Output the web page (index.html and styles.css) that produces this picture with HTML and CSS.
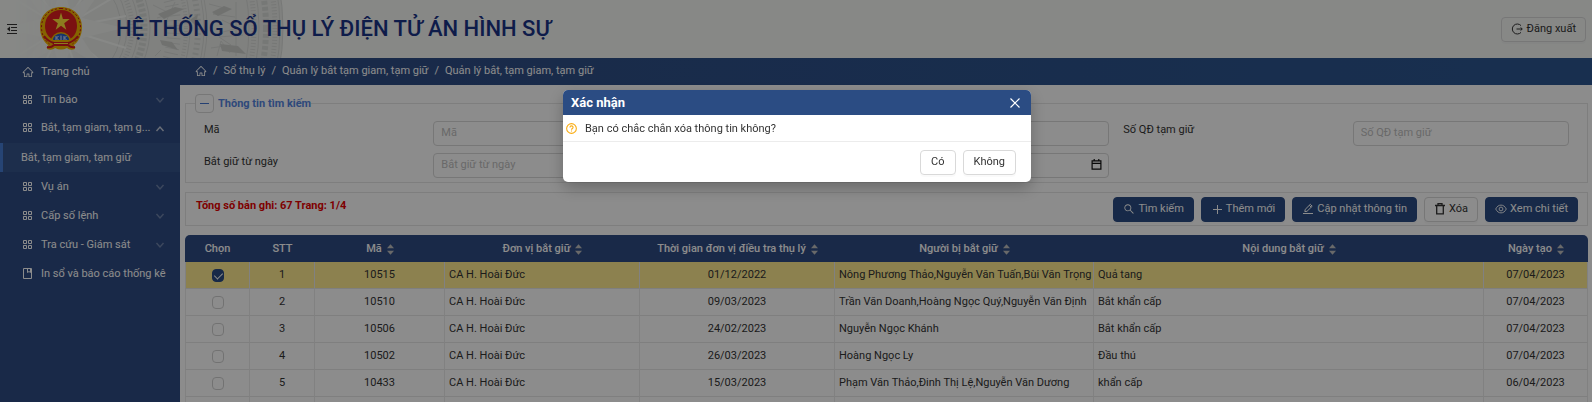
FILE: index.html
```html
<!DOCTYPE html>
<html lang="vi">
<head>
<meta charset="utf-8">
<title>Hệ thống sổ thụ lý điện tử án hình sự</title>
<link rel="stylesheet" href="styles.css">
</head>
<body>
<svg class="defs" aria-hidden="true">
  <symbol id="home" viewBox="0 0 1024 1024"><path d="M946.5 505L534.6 93.400a31.930 31.930 0 0 0-45.200 0L77.500 505c-12 12-18.800 28.300-18.800 45.300 0 35.300 28.700 64 64 64h43.400V908c0 17.700 14.300 32 32 32H448V716h112v224h265.900c17.700 0 32-14.300 32-32V614.300h43.400c17 0 33.300-6.700 45.300-18.800 24.900-25 24.900-65.500-.1-90.500zM786 542.300V868H632V676a32 32 0 0 0-32-32H424a32 32 0 0 0-32 32v192H238V542.300h-96l370-369.700 370 369.700z"/></symbol>
  <symbol id="grid" viewBox="0 0 12 12"><path fill="none" stroke="currentColor" d="M1.500 1.500h3v3h-3zM6.500 1.500h3v3h-3zM1.500 6.500h3v3h-3zM6.500 6.500h3v3h-3z"/></symbol>
  <symbol id="book" viewBox="0 0 12 12"><path fill="none" stroke="currentColor" d="M1.500 .5h8v10h-8zM5.500 .5v4l1.500-1 1.500 1v-4"/></symbol>
  <symbol id="down" viewBox="0 0 10 10"><path fill="none" stroke="currentColor" stroke-width="1.400" d="M1.500 3l3.500 4 3.500-4"/></symbol>
  <symbol id="up" viewBox="0 0 10 10"><path fill="none" stroke="currentColor" stroke-width="1.400" d="M1.500 8l3.500-4 3.500 4"/></symbol>
  <symbol id="search" viewBox="0 0 1024 1024"><path d="M909.600 854.500L649.900 594.800C690.200 542.700 712 479 712 412c0-80.200-31.300-155.400-87.900-212.100-56.600-56.700-132-87.900-212.100-87.900s-155.500 31.300-212.100 87.900C143.200 256.500 112 331.800 112 412c0 80.100 31.300 155.500 87.900 212.100C256.500 680.800 331.800 712 412 712c67 0 130.600-21.800 182.700-62l259.700 259.600a8.200 8.200 0 0 0 11.600 0l43.600-43.500a8.200 8.200 0 0 0 0-11.600zM570.400 570.400C528 612.700 471.800 636 412 636s-116-23.300-158.400-65.600C211.300 528 188 471.800 188 412s23.300-116.100 65.600-158.400C296 211.300 352.200 188 412 188s116.100 23.200 158.400 65.600S636 352.200 636 412s-23.300 116.100-65.600 158.400z"/></symbol>
  <symbol id="plus" viewBox="0 0 12 12"><path fill="none" stroke="currentColor" d="M6.500 2v9M2 6.500h9"/></symbol>
  <symbol id="edit" viewBox="0 0 12 12"><path fill="none" stroke="currentColor" d="M1 10.500h10M2.800 8.600l.4-2.200L8.300 1.300l1.900 1.900L5 8.300zM7.300 2.300l1.900 1.900"/></symbol>
  <symbol id="trash" viewBox="0 0 12 12"><path fill="none" stroke="currentColor" stroke-width="1.300" d="M1 2.500h10M4 2.300V.7h4v1.600M2.700 2.700v8.100h6.600V2.700"/></symbol>
  <symbol id="eye" viewBox="0 0 12 12"><g fill="none" stroke="currentColor" stroke-width=".9"><path d="M.7 6C2 3.400 3.800 2.100 6 2.100S10 3.400 11.300 6C10 8.600 8.200 9.900 6 9.900S2 8.600.7 6z"/><circle cx="6" cy="6" r="1.900"/></g></symbol>
  <symbol id="sort" viewBox="0 0 8 12"><path d="M4 0l4 4.500H0zM4 12l4-4.500H0z"/></symbol>
</svg>

<div class="page">
  <header class="top">
    <svg class="drum" viewBox="0 0 290 58" preserveAspectRatio="xMinYMin slice" aria-hidden="true">
      <defs>
        <linearGradient id="fade"><stop offset=".05" stop-color="#fff" stop-opacity="0"/><stop offset=".3" stop-color="#fff"/></linearGradient>
        <mask id="fadeMask"><rect width="290" height="58" fill="url(#fade)"/></mask>
      </defs>
      <g mask="url(#fadeMask)">
        <circle cx="62" cy="28" r="221" fill="#e9ebe8"/>
        <g fill="none" stroke="#d8dad7">
          <circle cx="62" cy="28" r="221"/><circle cx="62" cy="28" r="218"/>
          <circle cx="62" cy="28" r="213" stroke-width="5" stroke-dasharray="1 2"/>
          <circle cx="62" cy="28" r="204" stroke-width="6" stroke-dasharray="4 2"/>
          <circle cx="62" cy="28" r="197"/><circle cx="62" cy="28" r="192" stroke-width="5" stroke-dasharray="1 2"/>
          <circle cx="62" cy="28" r="187"/>
          <circle cx="62" cy="28" r="145"/><circle cx="62" cy="28" r="142"/>
          <circle cx="62" cy="28" r="136" stroke-width="6" stroke-dasharray="2 3"/>
          <circle cx="62" cy="28" r="128"/><circle cx="62" cy="28" r="124" stroke-width="4" stroke-dasharray="1 2"/>
          <circle cx="62" cy="28" r="112" stroke-width="14" stroke-dasharray="1 4"/>
          <circle cx="62" cy="28" r="88"/><circle cx="62" cy="28" r="82" stroke-width="7" stroke-dasharray="3 2"/>
          <circle cx="62" cy="28" r="76"/><circle cx="62" cy="28" r="70" stroke-width="5" stroke-dasharray="1 2"/>
          <circle cx="62" cy="28" r="65"/><circle cx="62" cy="28" r="59"/>
          <path d="M209 4l19 5-15 5 22 3M211 48l20-3-12-8 24-2M217 56l4-15 9 12M175 2l-10 22M222 20l17 8-20 5M236 2v54M161 50l-6 6M153 5l18 9-14 4"/>
        </g>
        <path fill="#cccecb" d="M158 14l17-7 9 2-20 10zM160 40l12 2 6 8-16-5zM212 12l12-6 8 3-14 7zM220 44l18 2 8 8-24-3zM190 20l8-6-2 12z"/>
        <path fill="none" stroke="#f6f8f5" stroke-width="2" d="M62 28L10-4M62 28L38-8M62 28V-8M62 28L86-8M62 28L116-4M62 28L126 16M62 28l64 20M62 28l42 36M62 28l14 40M62 28L44 64M62 28L14 58M62 28L2 34"/>
        <path fill="#f0f2ef" d="M62-18l8 28 34-24-22 32 42 10-42 10 20 30-32-20-8 30-8-30-34 20 24-30-38-10 38-10-24-32 34 24z"/>
      </g>
    </svg>
    <button class="fold" type="button" aria-label="Thu gọn menu">
      <svg viewBox="0 0 12 12"><path fill="none" stroke="currentColor" d="M1 1.500h10M5 4.500h6M5 7.500h6M1 10.500h10"/><path d="M4 3.500v5L1 6z"/></svg>
    </button>
    <svg class="emblem" viewBox="0 0 42 44" role="img" aria-label="Quốc huy">
      <path fill="#f2b400" d="M21 0C8 0 0 9 0 20c0 9 4 15 8 18l-1 4c3 1 6 1 8-1 4 2 8 2 12 0 2 2 5 2 8 1l-1-4c4-3 8-9 8-18C42 9 34 0 21 0z"/>
      <path fill="none" stroke="#c8141c" stroke-dasharray="2 2" d="M21 1.500C9 1.500 1.500 10 1.500 20c0 8 3 13 8 17M21 1.500c12 0 19.500 8.500 19.500 18.500 0 8-3 13-8 17"/>
      <path fill="#e02020" d="M21 3C11 3 5 10 5 19c0 6 3 11 7 13h18c4-2 7-7 7-13C37 10 31 3 21 3z"/>
      <path fill="#ffe23a" d="M21 5.500l1.900 6.600h6.800l-5.500 4.100 2.100 6.600-5.300-4.100-5.300 4.100 2.100-6.600-5.500-4.100h6.800z"/>
      <path fill="#f2b400" d="M11 34a10 9 0 0 1 20 0z"/>
      <path fill="#2862c8" d="M13 33a8 6.500 0 0 1 16 0z"/>
      <path fill="none" stroke="#e3ecff" d="M16 29v4M16.500 31l2-2M16.500 31l2 2M21 28.500v4.500M24 29v4M24.500 31l2-2M24.500 31l2 2"/>
      <path fill="none" stroke="#d81820" stroke-width="2" d="M4 29c3 4 6 6 10 7M38 29c-3 4-6 6-10 7M7 40c3 1 5 0 7-2M35 40c-3 1-5 0-7-2"/>
      <path fill="#d81820" d="M12 35h18l-2 4H14z"/>
      <path fill="none" stroke="#ffe23a" d="M14 36.500h14"/>
    </svg>
    <h1 class="title">HỆ THỐNG SỔ THỤ LÝ ĐIỆN TỬ ÁN HÌNH SỰ</h1>
    <button class="btn logout" type="button">
      <svg class="ico" viewBox="0 0 12 12"><path fill="none" stroke="currentColor" d="M10 2.600A5 5 0 1 0 10 9.400M5.500 6H11M9.600 4.500L11.300 6 9.600 7.500"/></svg>
      Đăng xuất
    </button>
  </header>

  <div class="shell">
    <nav class="side">
      <a class="item" href="#"><svg class="ico"><use href="#home"/></svg><span class="name">Trang chủ</span></a>
      <a class="item" href="#"><svg class="ico"><use href="#grid"/></svg><span class="name">Tin báo</span><svg class="arrow"><use href="#down"/></svg></a>
      <a class="item" href="#"><svg class="ico"><use href="#grid"/></svg><span class="name">Bắt, tạm giam, tạm g...</span><svg class="arrow open"><use href="#up"/></svg></a>
      <a class="item sub" href="#"><span class="name">Bắt, tạm giam, tạm giữ</span></a>
      <a class="item" href="#"><svg class="ico"><use href="#grid"/></svg><span class="name">Vụ án</span><svg class="arrow"><use href="#down"/></svg></a>
      <a class="item" href="#"><svg class="ico"><use href="#grid"/></svg><span class="name">Cấp số lệnh</span><svg class="arrow"><use href="#down"/></svg></a>
      <a class="item" href="#"><svg class="ico"><use href="#grid"/></svg><span class="name">Tra cứu - Giám sát</span><svg class="arrow"><use href="#down"/></svg></a>
      <a class="item last" href="#"><svg class="ico"><use href="#book"/></svg><span class="name">In sổ và báo cáo thống kê</span></a>
    </nav>

    <main class="main">
      <nav class="crumbs" aria-label="Đường dẫn">
        <a href="#" aria-label="Trang chủ"><svg class="ico"><use href="#home"/></svg></a><span>/</span>
        <a href="#">Sổ thụ lý</a><span>/</span>
        <a href="#">Quản lý bắt tạm giam, tạm giữ</a><span>/</span>
        <a href="#">Quản lý bắt, tạm giam, tạm giữ</a>
      </nav>

      <div class="content">
        <fieldset class="search">
          <legend><button class="toggle" type="button" aria-label="Thu gọn"></button>Thông tin tìm kiếm</legend>
          <div class="fields">
            <div class="field"><label for="ma">Mã</label><input id="ma" placeholder="Mã"></div>
            <div class="field"><span></span><input aria-label="Số QĐ bắt"></div>
            <div class="field"><label for="qd">Số QĐ tạm giữ</label><input id="qd" placeholder="Số QĐ tạm giữ"></div>
            <div class="field"><label for="tu">Bắt giữ từ ngày</label><input id="tu" placeholder="Bắt giữ từ ngày"></div>
            <div class="field"><span></span>
              <span class="date"><input aria-label="Đến ngày"><svg viewBox="0 0 12 12"><path fill="none" stroke="currentColor" stroke-width="1.300" d="M1.200 2h9.600v9H1.200zM1 4.700h10M3.500 0v2.500M8.500 0v2.500"/></svg></span></div>
          </div>
        </fieldset>

        <section class="bar">
          <p class="total">Tổng số bản ghi: 67 Trang: 1/4</p>
          <div class="actions">
            <button class="btn primary" type="button"><svg class="ico"><use href="#search"/></svg>Tìm kiếm</button>
            <button class="btn primary" type="button"><svg class="ico"><use href="#plus"/></svg>Thêm mới</button>
            <button class="btn primary" type="button"><svg class="ico"><use href="#edit"/></svg>Cập nhật thông tin</button>
            <button class="btn" type="button"><svg class="ico"><use href="#trash"/></svg>Xóa</button>
            <button class="btn primary" type="button"><svg class="ico"><use href="#eye"/></svg>Xem chi tiết</button>
          </div>
        </section>

        <table class="list">
          <colgroup><col class="c1"><col class="c2"><col class="c3"><col class="c4"><col class="c4"><col class="c5"><col class="c6"><col class="c7"></colgroup>
          <thead>
            <tr>
              <th>Chọn</th><th>STT</th>
              <th>Mã<svg class="sort"><use href="#sort"/></svg></th>
              <th>Đơn vị bắt giữ<svg class="sort"><use href="#sort"/></svg></th>
              <th>Thời gian đơn vị điều tra thụ lý<svg class="sort"><use href="#sort"/></svg></th>
              <th>Người bị bắt giữ<svg class="sort"><use href="#sort"/></svg></th>
              <th>Nội dung bắt giữ<svg class="sort"><use href="#sort"/></svg></th>
              <th>Ngày tạo<svg class="sort"><use href="#sort"/></svg></th>
            </tr>
          </thead>
          <tbody>
            <tr class="picked"><td><input type="checkbox" aria-label="Chọn 10515" checked></td><td>1</td><td>10515</td><td class="text">CA H. Hoài Đức</td><td>01/12/2022</td><td class="text">Nông Phương Thảo,Nguyễn Văn Tuấn,Bùi Văn Trọng</td><td class="text">Quả tang</td><td>07/04/2023</td></tr>
            <tr><td><input type="checkbox" aria-label="Chọn 10510"></td><td>2</td><td>10510</td><td class="text">CA H. Hoài Đức</td><td>09/03/2023</td><td class="text">Trần Văn Doanh,Hoàng Ngọc Quý,Nguyễn Văn Định</td><td class="text">Bắt khẩn cấp</td><td>07/04/2023</td></tr>
            <tr><td><input type="checkbox" aria-label="Chọn 10506"></td><td>3</td><td>10506</td><td class="text">CA H. Hoài Đức</td><td>24/02/2023</td><td class="text">Nguyễn Ngọc Khánh</td><td class="text">Bắt khẩn cấp</td><td>07/04/2023</td></tr>
            <tr><td><input type="checkbox" aria-label="Chọn 10502"></td><td>4</td><td>10502</td><td class="text">CA H. Hoài Đức</td><td>26/03/2023</td><td class="text">Hoàng Ngọc Ly</td><td class="text">Đầu thú</td><td>07/04/2023</td></tr>
            <tr><td><input type="checkbox" aria-label="Chọn 10433"></td><td>5</td><td>10433</td><td class="text">CA H. Hoài Đức</td><td>15/03/2023</td><td class="text">Phạm Văn Thảo,Đinh Thị Lệ,Nguyễn Văn Dương</td><td class="text">khẩn cấp</td><td>06/04/2023</td></tr>
            <tr><td></td><td></td><td></td><td></td><td></td><td></td><td></td><td></td></tr>
          </tbody>
        </table>
      </div>
    </main>
  </div>
</div>

<div class="mask">
  <div class="modal" role="dialog" aria-modal="true" aria-labelledby="dlg">
    <div class="modal-head">
      <h2 id="dlg">Xác nhận</h2>
      <button class="close" type="button" aria-label="Đóng"><svg viewBox="0 0 10 10"><path fill="none" stroke="currentColor" stroke-width="1.200" d="M.5.5l9 9M9.500.5l-9 9"/></svg></button>
    </div>
    <div class="modal-body">
      <svg viewBox="0 0 12 12"><g fill="none" stroke="currentColor" stroke-width="1.200"><circle cx="6" cy="6" r="5.300"/><path d="M4.300 4.900C4.300 2.600 7.700 2.600 7.700 4.800 7.700 6 6 6 6 7.400M6 8.300v1"/></g></svg>
      <p>Bạn có chắc chắn xóa thông tin không?</p>
    </div>
    <div class="modal-foot">
      <button class="btn" type="button">Có</button>
      <button class="btn" type="button">Không</button>
    </div>
  </div>
</div>
</body>
</html>
```

FILE: styles.css
```css
* { box-sizing: border-box; }

html, body { height: 100%; }

body {
  margin: 0;
  overflow: hidden;
  background: #fff;
  color: #333;
  font: 11px/16px Roboto, "Noto Sans", sans-serif;
}

h1, h2, p { margin: 0; }
a { color: inherit; text-decoration: none; }
svg { display: block; flex: none; fill: currentColor; }
.defs { position: absolute; width: 0; height: 0; }
.ico { width: 12px; height: 12px; }

button, input { font: inherit; color: inherit; }

.page { display: flex; flex-direction: column; height: 100vh; overflow: hidden; }

/* Header */
.top {
  position: relative;
  display: flex;
  flex: none;
  align-items: center;
  height: 58px;
  padding: 0 6px;
  background: #f6f8f5;
  overflow: hidden;
}
.drum { position: absolute; left: 0; top: 0; width: 290px; height: 58px; }
.fold { position: relative; width: 12px; height: 12px; padding: 0; border: 0; background: none; }
.fold svg { width: 12px; height: 12px; }
.emblem { position: relative; width: 42px; height: 44px; margin-left: 22px; }
.title {
  position: relative;
  flex: 1;
  margin-left: 34px;
  color: #1b3488;
  font-size: 22px;
  line-height: 28px;
  font-weight: 500;
}

.btn {
  display: flex;
  align-items: center;
  justify-content: center;
  gap: 3px;
  height: 25px;
  padding: 0 9px 2px;
  border: 1px solid #d9d9d9;
  border-radius: 4px;
  background: #fff;
  box-shadow: 0 2px 0 rgba(0, 0, 0, .02);
  white-space: nowrap;
}
.btn.primary { border-color: #2b4c83; background: #2b4c83; color: #fff; }
.btn.logout { gap: 4px; padding-bottom: 0; background: none; }

/* Sidebar */
.shell { display: flex; flex: 1; min-height: 0; }
.side {
  flex: none;
  width: 180px;
  background: #2f4c84;
  color: #fff;
}
.item { display: flex; align-items: center; height: 28px; padding: 0 15px 0 22px; }
.item .name {
  flex: 1;
  min-width: 0;
  margin: 0 5px 0 7px;
  white-space: nowrap;
}
.item.last .name { margin-right: 0; }
.arrow { width: 10px; height: 10px; opacity: .3; }
.arrow.open { opacity: .7; }
.item.sub { margin-top: 1px; padding-left: 18px; border-left: 3px solid #457cd3; background: #36558a; }
.item.sub, .sub ~ .item { height: 29px; }
.item.sub .name { margin-left: 0; }

/* Main area */
.main { flex: 1; min-width: 0; }
.crumbs {
  display: flex;
  align-items: center;
  gap: 6px;
  height: 27px;
  padding: 0 15px 2px;
  background: linear-gradient(90deg, #2f4c84, #2c5791);
  color: #fff;
}

.content { padding: 9px 4px 0 5px; }

.search {
  margin: 0;
  padding: 8px 18px 4px;
  border: 1px solid #e6e6e6;
  min-width: 0;
}
.search legend {
  display: flex;
  align-items: center;
  gap: 4px;
  height: 19px;
  margin-left: -9px;
  padding: 0;
  color: #5585e0;
  font-weight: 700;
}
.toggle {
  display: flex;
  align-items: center;
  justify-content: center;
  width: 19px;
  height: 19px;
  padding: 0;
  border: 1px solid #d9d9d9;
  border-radius: 4px;
  background: none;
}
.toggle::before { content: ""; width: 9px; height: 1px; background: #4475d0; }

.fields { display: grid; grid-template-columns: repeat(3, 1fr); gap: 7px 14px; }
.field { display: grid; grid-template-columns: 229fr 216fr; height: 25px; }
.field label { padding-top: 1px; }
.field input {
  width: 100%;
  min-width: 0;
  height: 25px;
  padding: 0 7px 2px;
  border: 1px solid #d9d9d9;
  border-radius: 4px;
  background: none;
  outline: 0;
}
.field input::placeholder { color: #bfbfbf; opacity: 1; }
.date { position: relative; }
.date svg { position: absolute; right: 7px; top: 6px; width: 11px; height: 11px; color: #111; }

.bar {
  display: flex;
  align-items: flex-start;
  justify-content: space-between;
  margin-top: 9px;
  padding: 4px 9px 3px 10px;
  border: 1px solid #e6e6e6;
}
.total { padding-top: 1px; color: #e60000; font-weight: 700; }
.actions { display: flex; gap: 7px; }

/* Records */
.list {
  width: 100%;
  margin-top: 9px;
  table-layout: fixed;
  border-collapse: separate;
  border-spacing: 0;
}
.c1 { width: 65px; }
.c2 { width: 65px; }
.c3 { width: 130px; }
.c4 { width: 195px; }
.c5 { width: 259px; }
.c6 { width: 390px; }
.c7 { width: 104px; }
.list th {
  height: 27px;
  padding: 0;
  background: #2f4c84;
  color: #fff;
  font-weight: 500;
  white-space: nowrap;
}
.list th:first-child { border-top-left-radius: 5px; }
.list th:last-child { border-top-right-radius: 5px; }
.sort { display: inline-block; width: 7px; height: 11px; margin-left: 5px; vertical-align: -3px; color: #bfbfbf; }
.list td {
  height: 27px;
  padding: 0 4px;
  border-right: 1px solid #ececec;
  border-bottom: 1px solid #e8e8e8;
  text-align: center;
  white-space: nowrap;
}
.list td:first-child { border-left: 1px solid #ececec; }
.list td.text { text-align: left; }
.picked td { background: #ffec90; }
.list input {
  display: block;
  width: 12px;
  height: 13px;
  margin: 0 auto;
  appearance: none;
  border: 1px solid #d0d0d0;
  border-radius: 4px;
}
.list input:checked { position: relative; border-color: #2b4c83; background: #2b4c83; }
.list input:checked::after {
  content: "";
  position: absolute;
  left: 3px;
  top: 1px;
  width: 4px;
  height: 7px;
  border: solid #fff;
  border-width: 0 1px 1px 0;
  transform: rotate(45deg);
}

/* Confirmation dialog */
.mask {
  position: fixed;
  inset: 0;
  display: flex;
  align-items: flex-start;
  justify-content: center;
  padding-top: 90px;
  background: rgba(0, 0, 0, .45);
}
.modal {
  width: 468px;
  margin-left: 2px;
  border-radius: 5px;
  overflow: hidden;
  background: #fff;
  box-shadow: 0 6px 16px rgba(0, 0, 0, .25);
}
.modal-head {
  display: flex;
  align-items: center;
  justify-content: space-between;
  height: 25px;
  padding: 0 11px 0 8px;
  background: #2b4c83;
  color: #fff;
}
.modal-head h2 { font-size: 13px; line-height: 16px; font-weight: 700; }
.close { padding: 0; border: 0; background: none; }
.close svg { width: 10px; height: 10px; }
.modal-body {
  display: flex;
  align-items: center;
  gap: 8px;
  height: 27px;
  padding: 1px 3px 0;
  border-bottom: 1px solid #ececec;
}
.modal-body svg { width: 11px; height: 11px; color: #faad14; }
.modal-foot { display: flex; justify-content: flex-end; gap: 7px; padding: 8px 15px 7px; }
.modal-foot .btn { padding: 0 10px 2px; }
```
